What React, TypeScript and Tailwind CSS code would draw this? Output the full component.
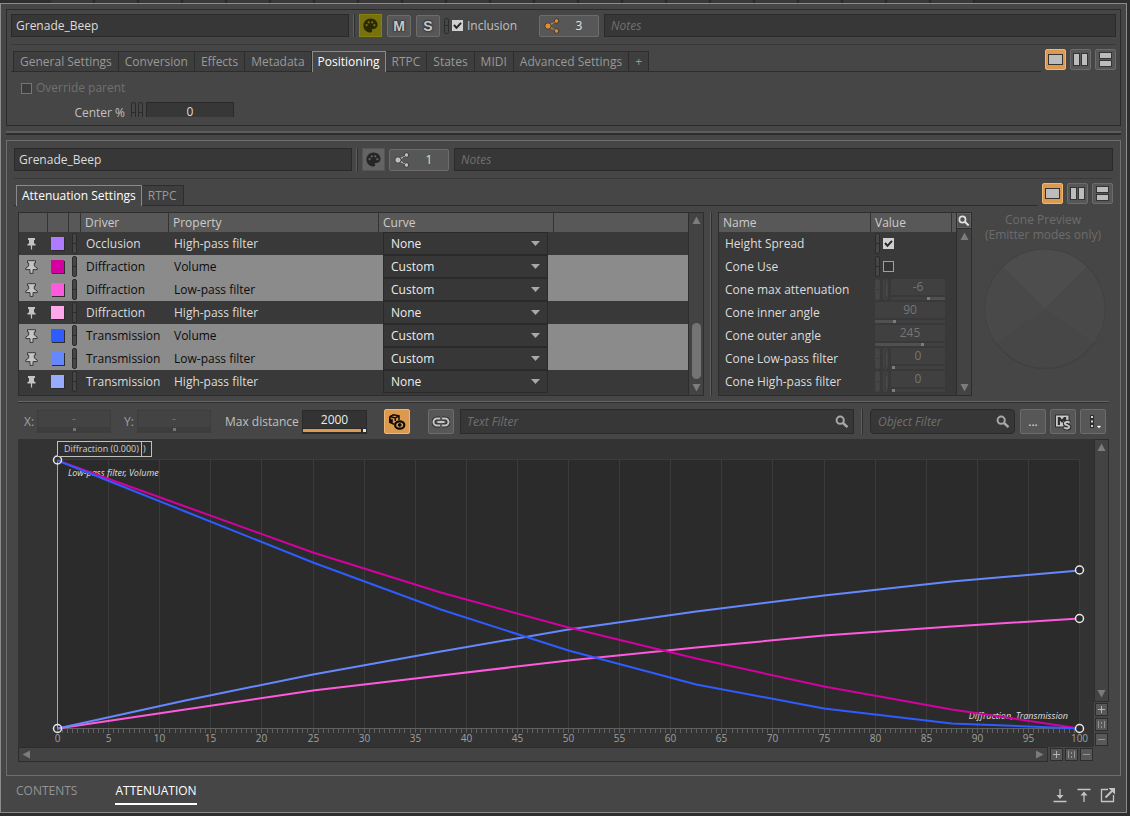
import React from "react";
import { MdPalette } from "react-icons/md";

type CurveRow = {
  driver: string;
  property: string;
  curve: "None" | "Custom";
  swatch: string;
  selected: boolean;
};

const rows: CurveRow[] = [
  { driver: "Occlusion", property: "High-pass filter", curve: "None", swatch: "bg-[#b07cff]", selected: false },
  { driver: "Diffraction", property: "Volume", curve: "Custom", swatch: "bg-[#d400a0]", selected: true },
  { driver: "Diffraction", property: "Low-pass filter", curve: "Custom", swatch: "bg-[#ff5add]", selected: true },
  { driver: "Diffraction", property: "High-pass filter", curve: "None", swatch: "bg-[#ffa8ea]", selected: false },
  { driver: "Transmission", property: "Volume", curve: "Custom", swatch: "bg-[#2f5cff]", selected: true },
  { driver: "Transmission", property: "Low-pass filter", curve: "Custom", swatch: "bg-[#6688ff]", selected: true },
  { driver: "Transmission", property: "High-pass filter", curve: "None", swatch: "bg-[#98acff]", selected: false },
];

type SliderRow = { name: string; value: string; position: number; linked: boolean; fill?: "left" | "right" };

const sliders: SliderRow[] = [
  { name: "Cone max attenuation", value: "-6", position: 66, linked: true, fill: "right" },
  { name: "Cone inner angle", value: "90", position: 25, linked: false, fill: "left" },
  { name: "Cone outer angle", value: "245", position: 66, linked: false, fill: "left" },
  { name: "Cone Low-pass filter", value: "0", position: 1, linked: true },
  { name: "Cone High-pass filter", value: "0", position: 1, linked: true },
];

function ShareIcon({ color }: { color: string }) {
  return (
    <svg width="16" height="16" viewBox="0 0 16 16" aria-hidden="true">
      <g stroke="#3a3a3a" strokeWidth="1" fill={color}>
        <circle cx="4" cy="8" r="3.2" />
        <circle cx="12.5" cy="3" r="2.3" />
        <circle cx="12.5" cy="13" r="2.3" />
      </g>
      <path d="M7 6.3 L10.5 4.2 M7 9.7 L10.5 11.8" stroke={color} strokeWidth="1.3" strokeDasharray="2 1" />
    </svg>
  );
}

function SearchIcon({ color = "#a8a8a8", size = 14 }: { color?: string; size?: number }) {
  return (
    <svg width={size} height={size} viewBox="0 0 14 14" fill="none" stroke={color} className="shrink-0" aria-hidden="true">
      <circle cx="5.2" cy="5.2" r="3.6" strokeWidth="2" />
      <path d="M8 8 L12.5 12.2" strokeWidth="2.4" />
    </svg>
  );
}

function PinIcon({ outlined }: { outlined: boolean }) {
  if (outlined) {
    return (
      <svg width="13" height="14" viewBox="0 0 13 14" className="block" aria-hidden="true">
        <path
          d="M2.5 0.7 H10.5 V3 H9.3 V6 L12.2 8 V9.6 H8 V13.4 H5 V9.6 H0.8 V8 L3.7 6 V3 H2.5 Z"
          fill="#c4c4c4"
          stroke="#3a3a3a"
        />
      </svg>
    );
  }
  return (
    <svg width="13" height="14" viewBox="0 0 13 14" className="block" aria-hidden="true">
      <path d="M3 1 H10 V3 H9 V6.4 L10.5 7 V8.4 H7.1 V12.5 H5.9 V8.4 H2.5 V7 L4 6.4 V3 H3 Z" fill="#c4c4c4" />
    </svg>
  );
}

function Pill({ tall = true, dim = false }: { tall?: boolean; dim?: boolean }) {
  return (
    <span
      className={
        "flex w-[5px] shrink-0 flex-col rounded-[2px] border bg-[#464646] " +
        (tall ? "h-[21px] " : "h-4 ") +
        (dim ? "border-[#434343]" : "border-[#2b2b2b]")
      }
    >
      <span className={"flex-1 border-b " + (dim ? "border-[#393939]" : "border-[#2b2b2b]")} />
      <span className="flex-1" />
    </span>
  );
}

function Tick({ label, checked = false, disabled = false, hideLabel = false }: {
  label: string;
  checked?: boolean;
  disabled?: boolean;
  hideLabel?: boolean;
}) {
  return (
    <label className="flex items-center gap-1">
      <span className="relative block size-[11px]">
        <input
          type="checkbox"
          aria-label={label}
          defaultChecked={checked}
          disabled={disabled}
          className="peer block size-[11px] appearance-none border border-[#a0a0a0] bg-[#333333] checked:border-[#d0d0d0] checked:bg-[#d0d0d0] disabled:border-[#757575] disabled:bg-[#3c3c3c]"
        />
        <svg viewBox="0 0 11 11" className="pointer-events-none absolute inset-0 hidden size-[11px] peer-checked:block" aria-hidden="true">
          <path d="M2 5 L4.5 7.8 L9 2.8" fill="none" stroke="#262626" strokeWidth="2" />
        </svg>
      </span>
      {!hideLabel && <span className={disabled ? "text-[#707070]" : "text-[#c0c0c0]"}>{label}</span>}
    </label>
  );
}

function LayoutButtons() {
  const base =
    "flex size-[21px] items-center justify-center rounded-[2px] border";
  return (
    <div className="flex gap-1">
      <button aria-label="Single view" className={base + " border-[#e9b878] bg-[#dd9a4e]"}>
        <span className="h-[11px] w-[15px] border border-[#333333] bg-[#bcbcbc]" />
      </button>
      <button aria-label="Side by side" className={base + " gap-px border-[#6c6c6c] bg-[#575757]"}>
        <span className="h-[13px] w-[7px] border border-[#333333] bg-[#bcbcbc]" />
        <span className="h-[13px] w-[7px] border border-[#333333] bg-[#bcbcbc]" />
      </button>
      <button aria-label="Stacked" className={base + " flex-col gap-px border-[#6c6c6c] bg-[#575757]"}>
        <span className="h-[7px] w-[13px] border border-[#333333] bg-[#bcbcbc]" />
        <span className="h-[7px] w-[13px] border border-[#333333] bg-[#bcbcbc]" />
      </button>
    </div>
  );
}

const letterButton =
  "ml-px flex h-[22px] w-6 items-center justify-center rounded-[2px] border border-[#6c6c6c] bg-[#575757] font-['Liberation_Sans',sans-serif] text-[14px] font-bold text-[#c8c8c8] [text-shadow:0_0_2px_#222,0_0_2px_#222]";

function ObjectHeader({ count, main = false }: { count: string; main?: boolean }) {
  return (
    <>
      <div className="flex h-[23px] items-center gap-1">
        <input
          aria-label="Object name"
          defaultValue="Grenade_Beep"
          className="h-[23px] w-[338px] border border-[#2a2a2a] bg-[#373737] px-1 text-[#dcdcdc] outline-none"
        />
        <span className="flex h-[23px] w-0.5 border-r border-l border-r-[#2f2f2f] border-l-[#5e5e5e]" />
        <button
          aria-label="Color"
          className={
            "flex size-[23px] items-center justify-center border " +
            (main ? "border-[#85800f] bg-[#77720c] text-[#2a2803]" : "border-[#555555] bg-[#646464] text-[#262626]")
          }
        >
          <MdPalette size={17} />
        </button>
        {main && (
          <>
            <button className={letterButton}>M</button>
            <button className={letterButton}>S</button>
            <div className="flex w-[91px] items-center gap-[3px]">
              <Pill tall={false} />
              <Tick label="Inclusion" checked />
            </div>
          </>
        )}
        <button className="flex h-[22px] w-[60px] items-center rounded-[2px] border border-[#6c6c6c] bg-[#575757] pl-1 text-[#e4e4e4]">
          <ShareIcon color={main ? "#e08c30" : "#bdbdbd"} />
          <span className={"flex-1 text-center " + (main ? "" : "text-[#c8f0c0]")}>{count}</span>
        </button>
        <input
          aria-label="Notes"
          placeholder="Notes"
          className="ml-px h-[23px] min-w-0 flex-1 border border-[#2a2a2a] bg-[#373737] px-1.5 italic outline-none placeholder:text-[#707070]"
        />
      </div>
      <div className="mt-[7px] mb-1 border-t border-[#393939]" />
    </>
  );
}

function TabStrip({ tabs, active }: { tabs: string[]; active: string }) {
  return (
    <div className="flex items-start gap-1">
      <div role="tablist" className="mt-0.5 flex h-[21px] min-w-0 flex-1 items-stretch border-b border-[#2d2d2d] pl-0.5">
        {tabs.map((t, i) => (
          <button
            key={t}
            role="tab"
            aria-selected={t === active}
            className={
              t === active
                ? "-mb-px h-[21px] border border-b-0 border-[#8a8a8a] bg-[#464646] px-[5px] text-white"
                : "h-5 border-t border-r border-[#2d2d2d] bg-[#3e3e3e] px-1.5 text-[#999999] " + (i === 0 ? "border-l" : "")
            }
          >
            {t}
          </button>
        ))}
      </div>
      <LayoutButtons />
    </div>
  );
}

function Arrow({ dir }: { dir: "up" | "down" | "left" | "right" }) {
  const d = {
    up: "M4.5 0.5 L8.5 8 H0.5 Z",
    down: "M0.5 1 H8.5 L4.5 8.5 Z",
    left: "M8 0.5 V8.5 L0.5 4.5 Z",
    right: "M1 0.5 L8.5 4.5 L1 8.5 Z",
  }[dir];
  return (
    <svg width="9" height="9" viewBox="0 0 9 9" aria-hidden="true">
      <path d={d} fill="#7c7c7c" />
    </svg>
  );
}

const headCell = "h-[19px] border-r border-[#333333] p-0 pl-1 text-left font-normal";

function CurveTable() {
  return (
    <div className="flex min-w-0 flex-1 border border-[#2d2d2d] bg-[#393939]">
      <div className="min-w-0 flex-1">
        <table className="w-full table-fixed border-separate border-spacing-0">
          <colgroup>
            <col className="w-[29px]" />
            <col className="w-[21px]" />
            <col className="w-3" />
            <col className="w-[88px]" />
            <col className="w-[210px]" />
            <col className="w-[175px]" />
            <col />
          </colgroup>
          <thead>
            <tr className="h-[19px] bg-[#585858] text-[#cccccc]">
              <th className={headCell} aria-label="Pin" />
              <th className={headCell} aria-label="Color" />
              <th className={headCell} aria-label="Link" />
              <th className={headCell}>Driver</th>
              <th className={headCell}>Property</th>
              <th className={headCell}>Curve</th>
              <th className="p-0" />
            </tr>
          </thead>
          <tbody>
            {rows.map((r, i) => (
              <tr key={i} className={"h-[23px] " + (r.selected ? "bg-[#8b8b8b] text-[#0c0c0c]" : "text-[#dcdcdc]")}>
                <td className="p-0 pl-1.5">
                  <PinIcon outlined={r.selected} />
                </td>
                <td className="p-0 pl-[3px]">
                  <span className={"block size-[13px] shadow-[1px_1px_0_#2b2b2b] " + r.swatch} />
                </td>
                <td className="p-0 pl-[3px]">
                  <Pill />
                </td>
                <td className="p-0 pl-[5px]">{r.driver}</td>
                <td className="p-0 pl-[5px]">{r.property}</td>
                <td className="p-0 pl-1">
                  <div className="relative h-[23px] w-[165px]">
                    <select
                      aria-label={r.driver + " " + r.property + " curve"}
                      defaultValue={r.curve}
                      className="block h-[23px] w-full appearance-none border border-[#2a2a2a] bg-[#373737] px-[7px] text-[#ececec] outline-none"
                    >
                      <option>None</option>
                      <option>Custom</option>
                    </select>
                    <svg width="9" height="5" viewBox="0 0 9 5" className="pointer-events-none absolute top-[9px] right-2" aria-hidden="true">
                      <path d="M0 0 H9 L4.5 5 Z" fill="#a8a8a8" />
                    </svg>
                  </div>
                </td>
                <td className="p-0" />
              </tr>
            ))}
          </tbody>
        </table>
      </div>
      <div className="flex w-[15px] flex-col items-center border-l border-[#2d2d2d] bg-[#434343] py-[3px]">
        <Arrow dir="up" />
        <span className="flex-1" />
        <span className="mb-1 h-14 w-[9px] rounded-full bg-[#747474]" />
        <Arrow dir="down" />
      </div>
    </div>
  );
}

function SliderCell({ row }: { row: SliderRow }) {
  return (
    <div className="flex h-[21px] w-[70px] gap-[3px]">
      {row.linked && (
        <>
          <Pill dim />
          <span className="h-[21px] w-[5px] shrink-0 rounded-[2px] border border-[#434343] bg-[#3e3e3e]">
            <span className="mt-1 ml-0.5 block h-3 border-l border-[#4b4b4b]" />
          </span>
        </>
      )}
      <div className="flex min-w-0 flex-1 flex-col">
        <input
          aria-label={row.name}
          defaultValue={row.value}
          disabled
          className="h-4 w-full bg-[#404040] text-center text-[#757575]"
        />
        <div className="mt-0.5 flex h-[3px] bg-[#404040]">
          <span
            className={row.fill === "left" ? "bg-[#505050]" : ""}
            style={{ width: row.position + "%" }}
          />
          <span className="size-[3px] shrink-0 bg-[#7c7c7c]" />
          <span className={"flex-1 " + (row.fill === "right" ? "bg-[#505050]" : "")} />
        </div>
      </div>
    </div>
  );
}

function PropertyTable() {
  return (
    <div className="flex w-[254px] border border-[#2d2d2d] bg-[#393939]">
      <div className="min-w-0 flex-1">
        <table className="w-full table-fixed border-separate border-spacing-0">
          <colgroup>
            <col className="w-[152px]" />
            <col className="w-[81px]" />
            <col />
          </colgroup>
          <thead>
            <tr className="h-[19px] bg-[#585858] text-[#cccccc]">
              <th className={headCell}>Name</th>
              <th className={headCell}>Value</th>
              <th className="p-0" />
            </tr>
          </thead>
          <tbody className="text-[#dcdcdc]">
            <tr className="h-[23px]">
              <td className="p-0 pl-1.5">Height Spread</td>
              <td className="p-0 pl-1">
                <div className="flex items-center gap-[3px]">
                  <Pill />
                  <Tick label="Height Spread" checked hideLabel />
                </div>
              </td>
              <td className="p-0" />
            </tr>
            <tr className="h-[23px]">
              <td className="p-0 pl-1.5">Cone Use</td>
              <td className="p-0 pl-1">
                <div className="flex items-center gap-[3px]">
                  <Pill />
                  <Tick label="Cone Use" hideLabel />
                </div>
              </td>
              <td className="p-0" />
            </tr>
            {sliders.map((s) => (
              <tr key={s.name} className="h-[23px]">
                <td className="p-0 pl-1.5">{s.name}</td>
                <td className="p-0 pl-1">
                  <SliderCell row={s} />
                </td>
                <td className="p-0" />
              </tr>
            ))}
          </tbody>
        </table>
      </div>
      <div className="flex w-[15px] flex-col border-l border-[#2d2d2d] bg-[#434343]">
        <button aria-label="Search properties" className="flex h-[15px] items-center justify-center border border-[#606060] bg-[#505050]">
          <SearchIcon color="#e0e0e0" size={12} />
        </button>
        <div className="flex flex-1 flex-col items-center justify-between border-t border-[#2d2d2d] py-[3px]">
          <Arrow dir="up" />
          <Arrow dir="down" />
        </div>
      </div>
    </div>
  );
}

function ConePreview() {
  return (
    <div className="flex w-[137px] flex-col items-center pl-[5px] text-center leading-[15px] text-[#6c6c6c]">
      <span>Cone Preview</span>
      <span className="whitespace-nowrap">(Emitter modes only)</span>
      <svg width="122" height="122" viewBox="0 0 122 122" className="mt-1.5 ml-1" aria-hidden="true">
        <circle cx="61" cy="61" r="59.5" fill="#474747" stroke="#414141" strokeWidth="1.5" />
        <path d="M61 61 L19 19 A59 59 0 0 1 103 19 Z" fill="#4d4d4d" />
        <path d="M61 61 L19 19 A59 59 0 0 0 12 95 Z" fill="#494949" />
        <path d="M61 61 L103 19 A59 59 0 0 1 110 95 Z" fill="#494949" />
      </svg>
    </div>
  );
}

const toolButton =
  "flex h-[25px] w-[26px] shrink-0 items-center justify-center rounded-[2px] border border-[#6c6c6c] bg-[#575757] text-[#e0e0e0]";

function CoordField({ label }: { label: string }) {
  return (
    <label className="flex items-center text-[#a0a0a0]">
      <span className="w-[13px]">{label}</span>
      <span className="flex w-[74px] flex-col border border-[#3d3d3d]">
        <input defaultValue="-" disabled className="h-4 w-full bg-[#434343] text-center text-[#757575]" />
        <span className="flex h-[5px] items-center justify-center bg-[#3d3d3d]">
          <span className="size-[3px] bg-[#757575]" />
        </span>
      </span>
    </label>
  );
}

function Toolbar() {
  return (
    <div className="flex h-[25px] items-center pr-[3px] pl-1.5">
      <CoordField label="X:" />
      <span className="w-[13px]" />
      <CoordField label="Y:" />
      <label className="ml-[14px] flex items-center text-[#c0c0c0]">
        <span className="w-[77px] whitespace-nowrap">Max distance</span>
        <span className="flex w-[65px] flex-col border border-[#2a2a2a]">
          <input defaultValue="2000" className="h-[17px] w-full bg-[#333333] text-center text-[#ececec] outline-none" />
          <span className="flex h-[5px] items-center border-t border-[#2a2a2a] bg-[#2a2a2a]">
            <span className="h-[3px] flex-1 bg-[#dd9a4e]" />
            <span className="ml-0.5 size-[3px] bg-[#e4e4e4]" />
          </span>
        </span>
      </label>
      <button aria-label="Show game objects" className="ml-[17px] flex h-[25px] w-[26px] shrink-0 items-center justify-center rounded-[2px] border border-[#e9b878] bg-[#dd9a4e]">
        <svg width="18" height="18" viewBox="0 0 18 18" fill="none" stroke="#0c0c0c" aria-hidden="true">
          <path d="M1.8 3.6 L5.5 1.8 L11 2.8 L11 7 M1.8 3.6 L7.3 5 L11 2.8 M1.8 3.6 V9.2 L6 11.2 M7.3 5 V8" strokeWidth="1.5" />
          <path d="M1.8 6 L4.6 6.4 L4.6 9.6 L1.8 9 Z" fill="#0c0c0c" strokeWidth="0.5" />
          <ellipse cx="11.7" cy="12" rx="4.6" ry="3.7" fill="#dd9a4e" strokeWidth="2.2" />
          <circle cx="11.7" cy="12" r="1.4" fill="#0c0c0c" />
        </svg>
      </button>
      <button aria-label="Link curves" className={toolButton + " ml-[18px]"}>
        <svg width="18" height="12" viewBox="0 0 18 12" fill="none" aria-hidden="true">
          <path d="M8 2.5 H5 A3.5 3.5 0 0 0 5 9.5 H8 M10 2.5 H13 A3.5 3.5 0 0 1 13 9.5 H10" stroke="#2d2d2d" strokeWidth="4" />
          <path d="M8 2.5 H5 A3.5 3.5 0 0 0 5 9.5 H8 M10 2.5 H13 A3.5 3.5 0 0 1 13 9.5 H10 M5.5 6 H12.5" stroke="#c4c4c4" strokeWidth="2" />
        </svg>
      </button>
      <div className="ml-1.5 flex h-[25px] min-w-0 flex-1 items-center border border-[#2a2a2a] bg-[#373737] pr-1">
        <input aria-label="Text Filter" placeholder="Text Filter" className="min-w-0 flex-1 bg-transparent px-1.5 italic outline-none placeholder:text-[#707070]" />
        <SearchIcon />
      </div>
      <span className="mx-[7px] h-[25px] w-0.5 border-r border-l border-r-[#2f2f2f] border-l-[#5e5e5e]" />
      <div className="flex h-[25px] w-[145px] items-center rounded border border-[#2a2a2a] bg-[#373737] pr-1">
        <input aria-label="Object Filter" placeholder="Object Filter" className="min-w-0 flex-1 bg-transparent px-[7px] italic outline-none placeholder:text-[#707070]" />
        <SearchIcon />
      </div>
      <div className="ml-[5px] flex gap-1">
        <button aria-label="Browse" className={toolButton}>...</button>
        <button aria-label="Mute and solo" className={toolButton}>
          <svg width="18" height="18" viewBox="0 0 18 18" aria-hidden="true">
            <path d="M1.5 2 H15 V9 H10 V14 H1.5 Z" fill="#c8c8c8" stroke="#2d2d2d" />
            <path d="M3.8 12 V4 H6 L8 6.5 L10 4 H12.2 V9 H10 V7.5 L8 10 L6 7.5 V12 Z" fill="#2d2d2d" />
            <path
              d="M15.5 9.8 C14 8.3 10.7 8.6 10.9 10.6 C11 12.4 15.4 11.8 15.3 13.8 C15.2 15.8 11.8 16 10.2 14.6"
              fill="none" stroke="#2d2d2d" strokeWidth="4"
            />
            <path
              d="M15.5 9.8 C14 8.3 10.7 8.6 10.9 10.6 C11 12.4 15.4 11.8 15.3 13.8 C15.2 15.8 11.8 16 10.2 14.6"
              fill="none" stroke="#c8c8c8" strokeWidth="2"
            />
          </svg>
        </button>
        <button aria-label="View options" className={toolButton}>
          <svg width="18" height="16" viewBox="0 0 18 16" aria-hidden="true">
            <path d="M6 1 H10 V14 H6 Z" fill="#2d2d2d" />
            <path d="M7 2 H9 V4 H7 Z M7 6.5 H9 V8.5 H7 Z M7 11 H9 V13 H7 Z" fill="#d4d4d4" />
            <path d="M13 11.5 H17 V12.5 L15 14.5 L13 12.5 Z" fill="#ffffff" stroke="#2d2d2d" strokeWidth="0.5" />
          </svg>
        </button>
      </div>
    </div>
  );
}

const plot = { left: 39, right: 1061, top: 21, bottom: 289 };
const stepX = (plot.right - plot.left) / 8;

const curves: { color: string; ys: number[] }[] = [
  { color: "#ff5add", ys: [289, 270, 251, 236, 221, 208, 196, 187, 179] },
  { color: "#6688ff", ys: [289, 261, 235, 212, 190, 172, 156, 142, 131] },
  { color: "#d400a0", ys: [21, 67, 113, 153, 188, 219, 247, 270, 289] },
  { color: "#2f5cff", ys: [21, 72, 123, 170, 211, 245, 269, 284, 289] },
];

function Chart() {
  const major = Array.from({ length: 21 }, (_, i) => i * 5);
  const minor = Array.from({ length: 201 }, (_, i) => i);
  const at = (v: number) => Math.round(plot.left + ((plot.right - plot.left) * v) / 100) + 0.5;
  return (
    <svg viewBox="0 0 1076 308" className="block h-auto w-full bg-[#333333]" role="img" aria-label="Attenuation curves">
      <rect x={plot.left} y={plot.top} width={plot.right - plot.left + 1} height={plot.bottom - plot.top} fill="#2b2b2b" />
      <g stroke="#3b3b3b">
        <path d={`M${plot.left} ${plot.top - 0.5} H${plot.right + 1}`} />
        {major.map((v) => (
          <path key={v} d={`M${at(v)} ${plot.top} V${plot.bottom}`} />
        ))}
      </g>
      <g stroke="#606060">
        <path d={`M${plot.left} ${plot.bottom + 0.5} H${plot.right}`} />
        {minor.map((v) => (
          <path key={v} d={`M${at(v / 2)} ${plot.bottom} v5`} />
        ))}
      </g>
      <path d={`M${plot.left + 0.5} ${plot.top} V${plot.bottom}`} stroke="#a8a8a8" />
      <g fill="#a0a0a0" fontSize="10" textAnchor="middle">
        {major.map((v) => (
          <text key={v} x={at(v)} y="303">{v}</text>
        ))}
      </g>
      <g fill="#d8d8d8" fontSize="9" fontStyle="italic" fontFamily="'Noto Sans', sans-serif">
        <text x="50" y="37">Low-pass filter, Volume</text>
        <text x="1050" y="280" textAnchor="end">Diffraction, Transmission</text>
      </g>
      {curves.map((c) => (
        <polyline
          key={c.color}
          fill="none"
          stroke={c.color}
          strokeWidth="2"
          points={c.ys.map((y, i) => `${plot.left + 0.5 + i * stepX},${y + 0.5}`).join(" ")}
        />
      ))}
      <g fill="none" stroke="#e8e8e8" strokeWidth="1.5">
        <circle cx="39.5" cy="21" r="4" />
        <circle cx="39.5" cy="289.5" r="4" />
        <circle cx="1061.5" cy="131" r="4" fill="#2b2b2b" />
        <circle cx="1061.5" cy="179.5" r="4" fill="#2b2b2b" />
        <circle cx="1061.5" cy="289.5" r="4" fill="#2b2b2b" />
      </g>
      <g fontSize="9" fontFamily="'Open Sans', sans-serif">
        <rect x="39.5" y="2.5" width="94" height="15" fill="#2e2e2e" stroke="#c0c0c0" />
        <text x="125" y="13" fill="#d0d0d0">)</text>
        <rect x="39.5" y="2.5" width="84" height="15" fill="#2e2e2e" stroke="#c0c0c0" />
        <text x="46" y="13" fill="#d0d0d0">Diffraction (0.000)</text>
      </g>
    </svg>
  );
}

function ZoomButtons({ vertical = false }: { vertical?: boolean }) {
  const cls = "flex size-[13px] items-center justify-center border border-[#2d2d2d] bg-[#585858]";
  return (
    <div className={"flex gap-0.5 " + (vertical ? "flex-col" : "")}>
      <button aria-label="Zoom in" className={cls}>
        <svg width="9" height="9" viewBox="0 0 9 9" aria-hidden="true"><path d="M1 4.5 H8 M4.5 1 V8" stroke="#b4b4b4" /></svg>
      </button>
      <button aria-label="Reset zoom" className={cls}>
        <svg width="9" height="9" viewBox="0 0 9 9" aria-hidden="true"><path d="M1.5 1 V8 M7.5 1 V8 M4.5 2 V4 M4.5 6 V8" stroke="#949494" /></svg>
      </button>
      <button aria-label="Zoom out" className={cls}>
        <svg width="9" height="9" viewBox="0 0 9 9" aria-hidden="true"><path d="M1 4.5 H8" stroke="#949494" /></svg>
      </button>
    </div>
  );
}

function ChartArea() {
  return (
    <div>
      <div className="flex">
        <div className="min-w-0 flex-1">
          <Chart />
        </div>
        <div className="flex w-[15px] flex-col">
          <div className="mb-px flex flex-1 flex-col items-center justify-between border border-[#2d2d2d] bg-[#434343] py-[3px]">
            <Arrow dir="up" />
            <Arrow dir="down" />
          </div>
          <div className="flex justify-center pb-px">
            <ZoomButtons vertical />
          </div>
        </div>
      </div>
      <div className="flex h-[15px] items-center gap-0.5 pr-4">
        <div className="flex h-[15px] flex-1 items-center justify-between border border-[#2d2d2d] bg-[#434343] px-[3px]">
          <Arrow dir="left" />
          <Arrow dir="right" />
        </div>
        <ZoomButtons />
      </div>
    </div>
  );
}

function Footer() {
  const icon = "flex size-4 items-center justify-center text-[#c4c4c4]";
  return (
    <footer className="flex flex-1 items-start justify-between pt-[5px] pr-[5px] pl-2.5">
      <div className="flex gap-[38px]">
        <button className="flex h-6 items-start pt-0.5 text-[#949494]">CONTENTS</button>
        <button className="flex h-6 items-start border-b-2 border-white pt-0.5 text-white">ATTENUATION</button>
      </div>
      <div className="flex gap-2 pt-1.5">
        <button aria-label="Move down" className={icon}>
          <svg width="16" height="16" viewBox="0 0 16 16" fill="none" stroke="currentColor" aria-hidden="true">
            <path d="M1.5 14.5 H14.5 M8 2 V10" strokeWidth="1.3" />
            <path d="M4.5 8 H11.5 L8 12 Z" fill="currentColor" stroke="none" />
          </svg>
        </button>
        <button aria-label="Move up" className={icon}>
          <svg width="16" height="16" viewBox="0 0 16 16" fill="none" stroke="currentColor" aria-hidden="true">
            <path d="M1.5 2.5 H14.5 M8 6 V15" strokeWidth="1.3" />
            <path d="M4.5 8.5 H11.5 L8 4.5 Z" fill="currentColor" stroke="none" />
          </svg>
        </button>
        <button aria-label="Open in window" className={icon}>
          <svg width="16" height="16" viewBox="0 0 16 16" fill="none" stroke="currentColor" aria-hidden="true">
            <path d="M8 2.5 H1.5 V14.5 H13.5 V8" strokeWidth="1.3" />
            <path d="M5.5 10.5 L12 4" strokeWidth="2" />
            <path d="M8.5 1 H15 V7.5 Z" fill="currentColor" stroke="none" />
          </svg>
        </button>
      </div>
    </footer>
  );
}

export default function App() {
  return (
    <div className="flex min-h-screen flex-col bg-[#2e2e2e] pr-[3px] pb-[3px] font-['Open_Sans','Noto_Sans',sans-serif] text-[12px] leading-4">
      <div className="flex h-[3px] overflow-hidden pl-[51px]">
        {Array.from({ length: 21 }, (_, i) => (
          <span key={i} className="w-11 shrink-0 border-r-2 border-[#282828] bg-[#393939]" />
        ))}
      </div>
      <main className="flex flex-1 flex-col border border-[#8c8c8c] bg-[#464646] px-[5px] pt-[5px]">
        <section className="border border-[#2a2a2a] px-1 pt-1 pb-2">
          <ObjectHeader count="3" main />
          <TabStrip
            active="Positioning"
            tabs={["General Settings", "Conversion", "Effects", "Metadata", "Positioning", "RTPC", "States", "MIDI", "Advanced Settings", "+"]}
          />
          <div className="mt-2 pl-2.5">
            <Tick label="Override parent" disabled />
          </div>
          <div className="mt-1.5 flex h-[15px] items-start">
            <label htmlFor="center" className="mt-[3px] w-[114px] text-right text-[#c0c0c0]">Center %</label>
            <div className="flex h-[15px] items-start overflow-hidden pl-1.5">
              <span className="flex shrink-0 gap-0.5">
                <Pill />
                <Pill />
              </span>
              <input
                id="center"
                defaultValue="0"
                className="ml-[3px] h-[18px] w-[88px] shrink-0 border border-[#2a2a2a] bg-[#373737] text-center text-[#dcdcdc] outline-none"
              />
            </div>
          </div>
        </section>

        <div className="mt-[5px] h-1 border-t-2 border-b-2 border-t-[#5e5e5e] border-b-[#2d2d2d]" />

        <section className="mt-[5px] border border-[#6e6e6e] px-[7px] pt-[7px] pb-[13px]">
          <ObjectHeader count="1" />
          <TabStrip active="Attenuation Settings" tabs={["Attenuation Settings", "RTPC"]} />
          <div className="pr-1 pl-1">
            <div className="mt-1.5 flex h-[184px]">
              <CurveTable />
              <span className="mx-1.5 w-0.5 border-r border-l border-r-[#2f2f2f] border-l-[#5e5e5e]" />
              <PropertyTable />
              <ConePreview />
            </div>
            <div className="mt-[5px] h-0.5 border-t border-b border-t-[#666666] border-b-[#2f2f2f]" />
            <div className="mt-1.5 mb-[5px]">
              <Toolbar />
            </div>
            <ChartArea />
          </div>
        </section>
        <Footer />
      </main>
    </div>
  );
}
